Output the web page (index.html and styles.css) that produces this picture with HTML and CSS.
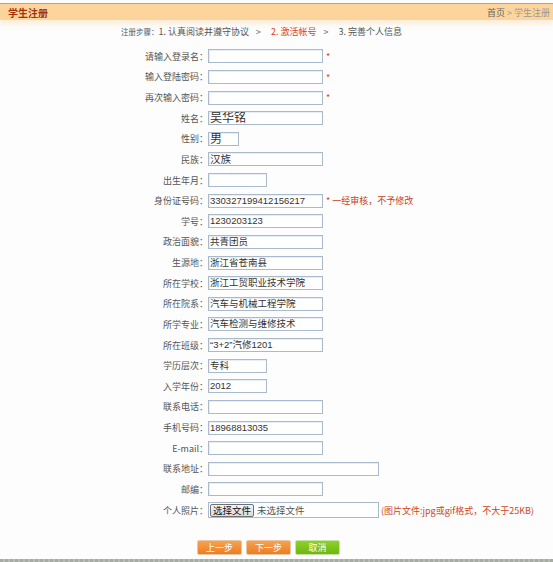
FILE: index.html
```html
<!DOCTYPE html>
<html lang="zh">
<head>
<meta charset="utf-8">
<title>学生注册</title>
<link rel="stylesheet" href="styles.css">
</head>
<body>
<div class="page">
  <div class="topbar">
    <span class="title">学生注册</span>
    <span class="crumb"><b>首页</b> &gt; 学生注册</span>
  </div>
  <div class="steps">
    <span class="s-lbl">注册步骤：</span>
    <span class="s-item">1. 认真阅读并遵守协议</span>
    <span class="s-arrow">&gt;</span>
    <span class="s-item cur">2. 激活帐号</span>
    <span class="s-arrow">&gt;</span>
    <span class="s-item">3. 完善个人信息</span>
  </div>
  <div class="form">
    <div class="lbl">请输入登录名：</div><div class="fld"><span class="inp w-l"></span><span class="req">*</span></div>
    <div class="lbl">输入登陆密码：</div><div class="fld"><span class="inp w-l"></span><span class="req">*</span></div>
    <div class="lbl">再次输入密码：</div><div class="fld"><span class="inp w-l"></span><span class="req">*</span></div>
    <div class="lbl">姓名：</div><div class="fld"><span class="inp w-l big">吴华铭</span></div>
    <div class="lbl">性别：</div><div class="fld"><span class="inp w-xs big">男</span></div>
    <div class="lbl">民族：</div><div class="fld"><span class="inp w-l mid">汉族</span></div>
    <div class="lbl">出生年月：</div><div class="fld"><span class="inp w-s"></span></div>
    <div class="lbl">身份证号码：</div><div class="fld"><span class="inp w-l">330327199412156217</span><span class="note">* 一经审核，不予修改</span></div>
    <div class="lbl">学号：</div><div class="fld"><span class="inp w-l">1230203123</span></div>
    <div class="lbl">政治面貌：</div><div class="fld"><span class="inp w-l">共青团员</span></div>
    <div class="lbl">生源地：</div><div class="fld"><span class="inp w-l">浙江省苍南县</span></div>
    <div class="lbl">所在学校：</div><div class="fld"><span class="inp w-l">浙江工贸职业技术学院</span></div>
    <div class="lbl">所在院系：</div><div class="fld"><span class="inp w-l">汽车与机械工程学院</span></div>
    <div class="lbl">所学专业：</div><div class="fld"><span class="inp w-l">汽车检测与维修技术</span></div>
    <div class="lbl">所在班级：</div><div class="fld"><span class="inp w-l">“3+2”汽修1201</span></div>
    <div class="lbl">学历层次：</div><div class="fld"><span class="inp w-s">专科</span></div>
    <div class="lbl">入学年份：</div><div class="fld"><span class="inp w-s">2012</span></div>
    <div class="lbl">联系电话：</div><div class="fld"><span class="inp w-l"></span></div>
    <div class="lbl">手机号码：</div><div class="fld"><span class="inp w-l">18968813035</span></div>
    <div class="lbl">E-mail：</div><div class="fld"><span class="inp w-l"></span></div>
    <div class="lbl">联系地址：</div><div class="fld"><span class="inp w-xl"></span></div>
    <div class="lbl">邮编：</div><div class="fld"><span class="inp w-l"></span></div>
    <div class="lbl">个人照片：</div><div class="fld"><span class="file"><span class="file-btn">选择文件</span><span class="file-txt">未选择文件</span></span><span class="note2">(图片文件:jpg或gif格式，不大于25KB)</span></div>
  </div>
  <div class="buttons">
    <span class="btn orange">上一步</span>
    <span class="btn orange">下一步</span>
    <span class="btn green">取消</span>
  </div>
  <div class="footline"></div>
</div>
</body>
</html>
```
FILE: styles.css
```css
html, body {
  margin: 0;
  padding: 0;
  background: #fdfdfd;
}
.page {
  width: 553px;
  height: 562px;
  position: relative;
  font-family: "Noto Sans CJK SC", "Liberation Sans", sans-serif;
  font-size: 9px;
  color: #555;
  overflow: hidden;
}
.topbar {
  margin-top: 3px;
  height: 16px;
  border-top: 1px solid #e39a4f;
  background: #fdd49c;
  display: flex;
  align-items: center;
  justify-content: space-between;
  padding: 0 3px 0 8px;
  box-shadow: 0 4px 5px rgba(253, 222, 180, 0.5);
}
.title {
  font-weight: bold;
  font-size: 10px;
  color: #a2320b;
}
.crumb {
  color: #999;
  font-size: 9px;
}
.crumb b {
  color: #666;
  font-weight: normal;
}
.steps {
  margin-top: 5px;
  height: 14px;
  line-height: 14px;
  padding-left: 121px;
  display: flex;
  align-items: baseline;
  color: #555;
}
.s-lbl { font-size: 7.5px; }
.s-arrow { margin: 0 10px 0 7px; color: #666; }
.s-item.cur { color: #e03c1c; }
.form {
  margin-top: 7px;
  display: grid;
  grid-template-columns: 208px auto;
  grid-auto-rows: 20.64px;
}
.lbl {
  text-align: right;
  display: flex;
  align-items: center;
  justify-content: flex-end;
  color: #555;
  white-space: nowrap;
}
.fld {
  display: flex;
  align-items: center;
}
.inp {
  box-sizing: border-box;
  height: 14px;
  border: 1px solid #a9bacc;
  background: #fff;
  padding: 0 1px;
  font-size: 9.5px;
  line-height: 12px;
  color: #333;
  font-family: "Liberation Sans", "Noto Sans CJK SC", sans-serif;
  white-space: nowrap;
  overflow: hidden;
  box-shadow: inset 1px 1px 0 #e8eef5;
}
.inp.big { font-size: 12px; line-height: 12px; }
.inp.mid { font-size: 10.5px; }
.w-l { width: 115px; }
.w-xs { width: 31px; }
.w-s { width: 59px; }
.w-xl { width: 171px; }
.req {
  color: #e03c1c;
  margin-left: 3px;
  font-size: 9px;
  line-height: 9px;
  align-self: flex-start;
  margin-top: 6px;
}
.note {
  color: #c8421a;
  margin-left: 3px;
  font-size: 9px;
}
.file {
  box-sizing: border-box;
  width: 171px;
  height: 16px;
  border: 1px solid #a9bacc;
  background: #fff;
  display: flex;
  align-items: center;
  padding-left: 1px;
}
.file-btn {
  box-sizing: border-box;
  height: 13px;
  line-height: 11px;
  border: 1px solid #707070;
  border-radius: 2px;
  background: linear-gradient(#f4f4f4, #dcdcdc);
  color: #111;
  font-size: 9.5px;
  padding: 0 2px;
}
.file-txt {
  margin-left: 3px;
  color: #555;
  font-size: 9.5px;
}
.note2 {
  color: #d0451b;
  margin-left: 2px;
  font-size: 9px;
  white-space: nowrap;
}
.buttons {
  margin-top: 20px;
  padding-left: 197px;
  display: flex;
  gap: 4px;
}
.btn {
  box-sizing: border-box;
  width: 45px;
  height: 15px;
  line-height: 15px;
  text-align: center;
  color: #fff;
  font-size: 9px;
  border-radius: 2px;
}
.btn.orange {
  background: linear-gradient(#f7a24d, #ec7d25);
  border: 1px solid #e9c7a3;
  line-height: 13px;
}
.btn.green {
  background: linear-gradient(#8fd02b, #6fb612);
  border: 1px solid #c7e2a6;
  line-height: 13px;
}
.footline {
  position: absolute;
  left: 0;
  right: 0;
  bottom: 0;
  height: 3px;
  background: repeating-linear-gradient(90deg, #a6ada0 0 3px, #b9beb4 3px 5px);
}
```
